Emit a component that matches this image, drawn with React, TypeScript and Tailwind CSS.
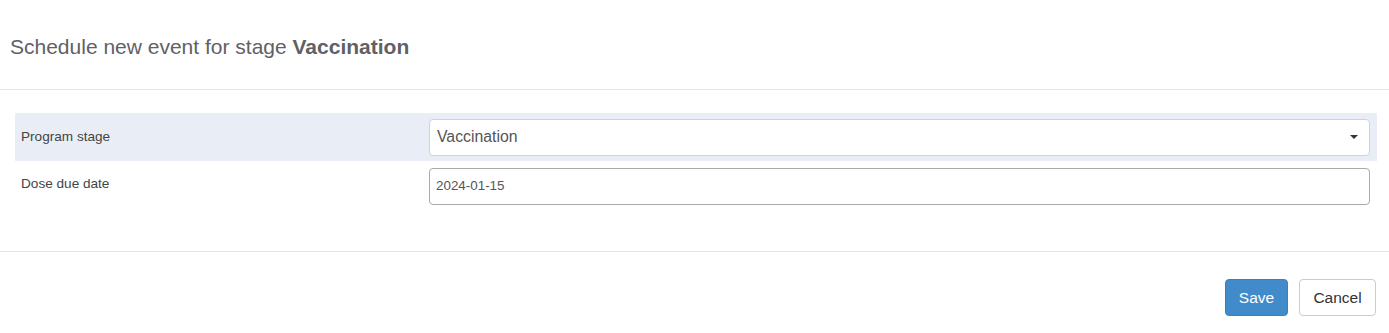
export default function App() {
  return (
    <div
      className="w-[1389px] h-[333px] bg-white text-[#333]"
      style={{ fontFamily: '"Liberation Sans", Arial, sans-serif' }}
    >
      {/* Header */}
      <div className="h-[90px] border-b border-[#e5e5e5] pl-[10px] flex items-center">
        <h3 className="text-[21px] text-[#5f6166] pt-[4px]">
          Schedule new event for stage <span className="font-bold">Vaccination</span>
        </h3>
      </div>

      {/* Body */}
      <div className="h-[162px] pt-[23px] pl-[15px] pr-[12px] border-b border-[#e5e5e5]">
        <div className="flex items-center h-[48px] bg-[#e9eef6] pl-[6px] pr-[7px]">
          <div className="w-[408px] text-[13.6px] text-[#444]">Program stage</div>
          <div className="flex-1 h-[37px] bg-white border border-[#d2d2d2] rounded-[4px] flex items-center justify-between pl-[7px] pr-[11px]">
            <span className="text-[15.8px] text-[#555]">Vaccination</span>
            <span className="w-0 h-0 border-l-[4px] border-r-[4px] border-t-[4px] border-l-transparent border-r-transparent border-t-[#333]" />
          </div>
        </div>
        <div className="flex items-center h-[50px] pl-[6px] pr-[7px]">
          <div className="w-[408px] text-[13.6px] text-[#444] -mt-[4px]">Dose due date</div>
          <div className="flex-1 h-[37px] mt-[1px] bg-white border border-[#aaa] rounded-[4px] flex items-center pl-[6px]">
            <span className="text-[13.4px] text-[#555]">2024-01-15</span>
          </div>
        </div>
      </div>

      {/* Footer */}
      <div className="flex justify-end gap-[11px] pt-[27px] pr-[13px]">
        <button className="h-[37px] w-[63px] rounded-[4px] bg-[#428bca] border border-[#3a80bd] text-white text-[15.5px]">
          Save
        </button>
        <button className="h-[37px] w-[77px] rounded-[4px] bg-white border border-[#ccc] text-[#333] text-[15.5px]">
          Cancel
        </button>
      </div>
    </div>
  )
}
